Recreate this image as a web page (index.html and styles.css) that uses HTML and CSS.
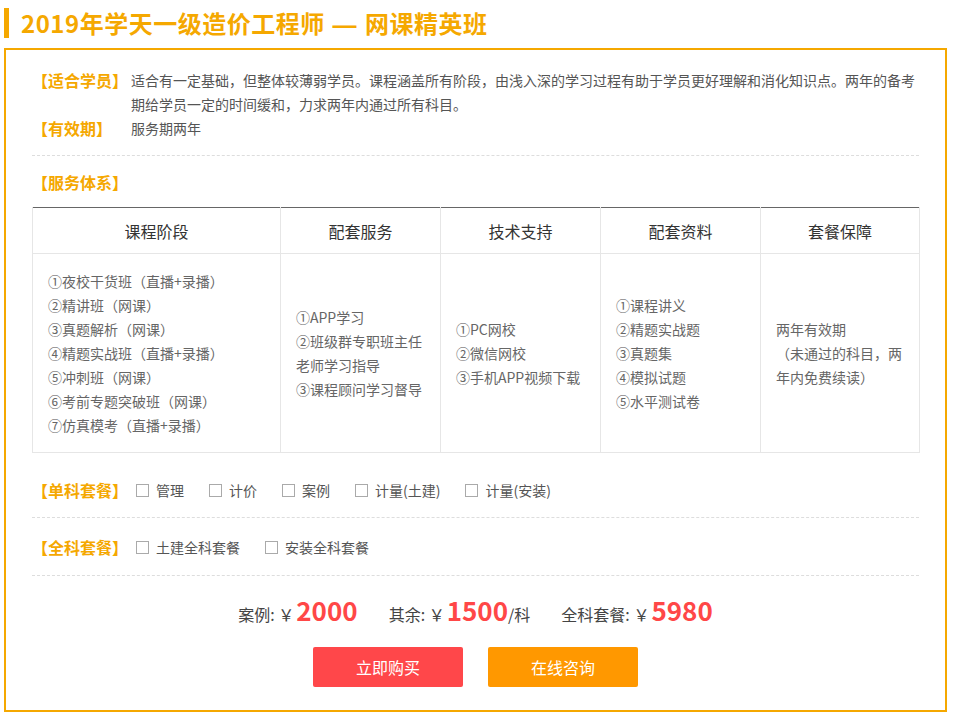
FILE: index.html
```html
<!DOCTYPE html>
<html lang="zh-CN">
<head>
<meta charset="utf-8">
<title>2019年学天一级造价工程师 — 网课精英班</title>
<link rel="stylesheet" href="styles.css">
</head>
<body>
<div class="page">
  <h1 class="title">2019年学天一级造价工程师 <span class="dash">—</span> 网课精英班</h1>
  <div class="box">
    <div class="info">
      <div class="info-row">
        <span class="label">【适合学员】</span>
        <p class="info-text">适合有一定基础，但整体较薄弱学员。课程涵盖所有阶段，由浅入深的学习过程有助于学员更好理解和消化知识点。两年的备考期给学员一定的时间缓和，力求两年内通过所有科目。</p>
      </div>
      <div class="info-row">
        <span class="label">【有效期】</span>
        <p class="info-text">服务期两年</p>
      </div>
    </div>
    <div class="service">
      <div class="label service-label">【服务体系】</div>
      <table class="svc-table">
        <colgroup>
          <col class="c1"><col class="c2"><col class="c3"><col class="c4"><col class="c5">
        </colgroup>
        <thead>
          <tr><th>课程阶段</th><th>配套服务</th><th>技术支持</th><th>配套资料</th><th>套餐保障</th></tr>
        </thead>
        <tbody>
          <tr>
            <td>①夜校干货班（直播+录播）<br>②精讲班（网课）<br>③真题解析（网课）<br>④精题实战班（直播+录播）<br>⑤冲刺班（网课）<br>⑥考前专题突破班（网课）<br>⑦仿真模考（直播+录播）</td>
            <td>①APP学习<br>②班级群专职班主任老师学习指导<br>③课程顾问学习督导</td>
            <td>①PC网校<br>②微信网校<br>③手机APP视频下载</td>
            <td>①课程讲义<br>②精题实战题<br>③真题集<br>④模拟试题<br>⑤水平测试卷</td>
            <td>两年有效期<br>（未通过的科目，两年内免费续读）</td>
          </tr>
        </tbody>
      </table>
    </div>
    <div class="pkg-row pkg-first">
      <span class="label">【单科套餐】</span>
      <label class="opt"><span class="check"></span>管理</label>
      <label class="opt"><span class="check"></span>计价</label>
      <label class="opt"><span class="check"></span>案例</label>
      <label class="opt"><span class="check"></span>计量(土建)</label>
      <label class="opt"><span class="check"></span>计量(安装)</label>
    </div>
    <div class="pkg-row">
      <span class="label">【全科套餐】</span>
      <label class="opt"><span class="check"></span>土建全科套餐</label>
      <label class="opt"><span class="check"></span>安装全科套餐</label>
    </div>
    <div class="prices">
      <span class="price">案例: ￥<b>2000</b></span>
      <span class="price">其余: ￥<b>1500</b>/科</span>
      <span class="price">全科套餐: ￥<b>5980</b></span>
    </div>
    <div class="actions">
      <a class="btn btn-buy">立即购买</a>
      <a class="btn btn-ask">在线咨询</a>
    </div>
  </div>
</div>
</body>
</html>
```
FILE: styles.css
```css
* { box-sizing: border-box; }
html, body { margin: 0; padding: 0; background: #fff; }
body {
  font-family: "Noto Sans CJK SC", "Noto Sans", sans-serif;
  color: #555;
}
.page { padding: 8px 0 0 4px; width: 947px; }
.title {
  margin: 0 0 10px 0;
  height: 30px;
  line-height: 30px;
  border-left: 5px solid #f5a800;
  padding-left: 12px;
  font-size: 24px;
  font-weight: bold;
  letter-spacing: 0.5px;
  word-spacing: 2px;
  color: #f5a800;
  white-space: nowrap;
}
.dash { font-family: "Liberation Sans", sans-serif; font-weight: bold; }
.box {
  width: 943px;
  height: 664px;
  border: 2px solid #f5a800;
  padding: 18px 26px 0 26px;
}
.label {
  color: #f5a800;
  font-size: 16px;
  font-weight: bold;
  line-height: 24px;
  flex: none;
}
.info { border-bottom: 1px dashed #ddd; padding-bottom: 15px; }
.info-row { display: flex; }
.info-row .label { width: 99px; }
.info-text {
  margin: 0;
  width: 788px;
  font-size: 14px;
  line-height: 24px;
  color: #555;
}
.service { padding-top: 14px; }
.service-label { margin-bottom: 13px; }
.svc-table {
  width: 887px;
  border-collapse: collapse;
  table-layout: fixed;
  border-top: 1px solid #666;
}
.c1 { width: 248px; }
.c2, .c3, .c4 { width: 160px; }
.c5 { width: 159px; }
.svc-table th {
  height: 46px;
  font-size: 16px;
  font-weight: normal;
  color: #333;
  border: 1px solid #e6e6e6;
  border-top: none;
}
.svc-table td {
  padding: 15px 15px;
  font-size: 14px;
  line-height: 24px;
  color: #666;
  border: 1px solid #e6e6e6;
  vertical-align: middle;
}
.pkg-row {
  display: flex;
  align-items: center;
  padding: 17px 0 16px;
  border-bottom: 1px dashed #ddd;
  font-size: 14px;
  line-height: 24px;
}
.pkg-first { margin-top: 7px; padding-top: 18px; padding-bottom: 15px; }
.pkg-row .label { width: 104px; }
.opt {
  display: flex;
  align-items: center;
  margin-right: 25px;
  color: #555;
}
.check {
  width: 13px;
  height: 13px;
  border: 1px solid #aaa;
  margin-right: 7px;
}
.prices {
  display: flex;
  justify-content: center;
  align-items: baseline;
  gap: 31px;
  padding-top: 18px;
  font-size: 16px;
  line-height: 32px;
  height: 51px;
  color: #444;
}
.price b {
  font-size: 26px;
  font-weight: bold;
  color: #ff4747;
  margin-left: 2px;
}
.actions {
  display: flex;
  justify-content: center;
  gap: 25px;
  margin-top: 20px;
}
.btn {
  width: 150px;
  height: 40px;
  line-height: 40px;
  text-align: center;
  font-size: 16px;
  color: #fff;
  border-radius: 2px;
}
.btn-buy { background: #ff474a; }
.btn-ask { background: #ff9800; }
```
